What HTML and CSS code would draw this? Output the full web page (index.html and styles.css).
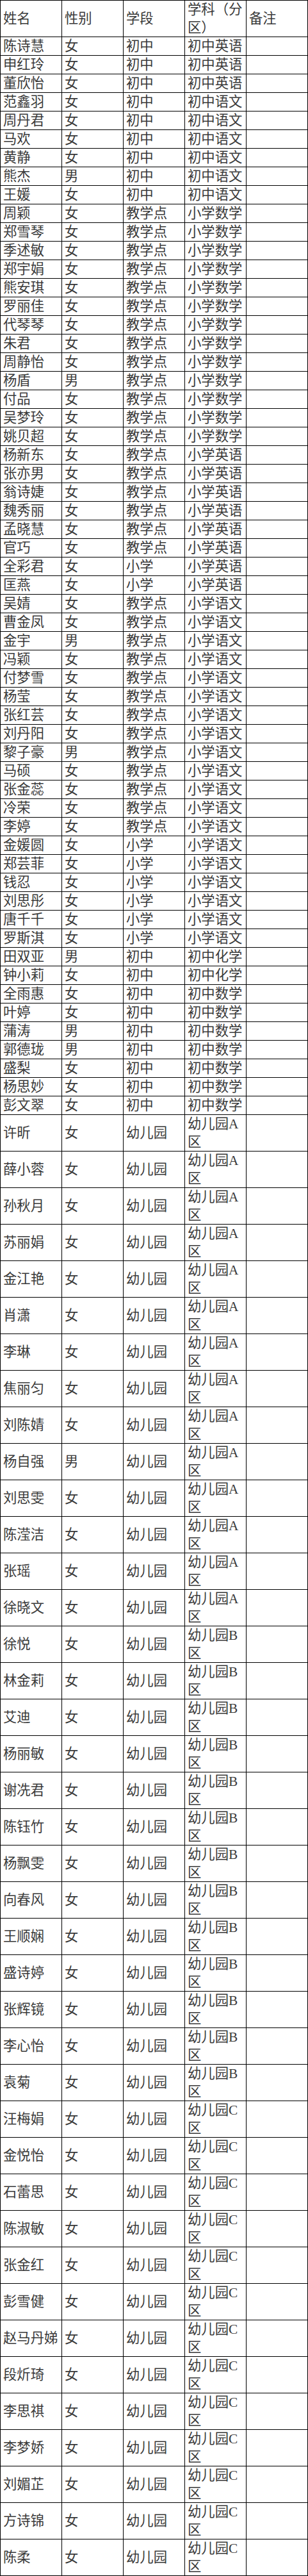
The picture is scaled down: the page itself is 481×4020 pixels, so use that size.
FILE: index.html
```html
<!DOCTYPE html>
<html lang="zh-CN">
<head>
<meta charset="utf-8">
<title>名单</title>
<link rel="stylesheet" href="styles.css">
</head>
<body>
<table class="roster">
<colgroup><col class="c"><col class="c"><col class="c"><col class="c"><col class="c"></colgroup>
<tbody>
<tr><td>姓名</td><td>性别</td><td>学段</td><td>学科（分区）</td><td>备注</td></tr>
<tr><td>陈诗慧</td><td>女</td><td>初中</td><td>初中英语</td><td></td></tr>
<tr><td>申红玲</td><td>女</td><td>初中</td><td>初中英语</td><td></td></tr>
<tr><td>董欣怡</td><td>女</td><td>初中</td><td>初中英语</td><td></td></tr>
<tr><td>范鑫羽</td><td>女</td><td>初中</td><td>初中语文</td><td></td></tr>
<tr><td>周丹君</td><td>女</td><td>初中</td><td>初中语文</td><td></td></tr>
<tr><td>马欢</td><td>女</td><td>初中</td><td>初中语文</td><td></td></tr>
<tr><td>黄静</td><td>女</td><td>初中</td><td>初中语文</td><td></td></tr>
<tr><td>熊杰</td><td>男</td><td>初中</td><td>初中语文</td><td></td></tr>
<tr><td>王媛</td><td>女</td><td>初中</td><td>初中语文</td><td></td></tr>
<tr><td>周颖</td><td>女</td><td>教学点</td><td>小学数学</td><td></td></tr>
<tr><td>郑雪琴</td><td>女</td><td>教学点</td><td>小学数学</td><td></td></tr>
<tr><td>季述敏</td><td>女</td><td>教学点</td><td>小学数学</td><td></td></tr>
<tr><td>郑宇娟</td><td>女</td><td>教学点</td><td>小学数学</td><td></td></tr>
<tr><td>熊安琪</td><td>女</td><td>教学点</td><td>小学数学</td><td></td></tr>
<tr><td>罗丽佳</td><td>女</td><td>教学点</td><td>小学数学</td><td></td></tr>
<tr><td>代琴琴</td><td>女</td><td>教学点</td><td>小学数学</td><td></td></tr>
<tr><td>朱君</td><td>女</td><td>教学点</td><td>小学数学</td><td></td></tr>
<tr><td>周静怡</td><td>女</td><td>教学点</td><td>小学数学</td><td></td></tr>
<tr><td>杨盾</td><td>男</td><td>教学点</td><td>小学数学</td><td></td></tr>
<tr><td>付品</td><td>女</td><td>教学点</td><td>小学数学</td><td></td></tr>
<tr><td>吴梦玲</td><td>女</td><td>教学点</td><td>小学数学</td><td></td></tr>
<tr><td>姚贝超</td><td>女</td><td>教学点</td><td>小学数学</td><td></td></tr>
<tr><td>杨新东</td><td>女</td><td>教学点</td><td>小学英语</td><td></td></tr>
<tr><td>张亦男</td><td>女</td><td>教学点</td><td>小学英语</td><td></td></tr>
<tr><td>翁诗婕</td><td>女</td><td>教学点</td><td>小学英语</td><td></td></tr>
<tr><td>魏秀丽</td><td>女</td><td>教学点</td><td>小学英语</td><td></td></tr>
<tr><td>孟晓慧</td><td>女</td><td>教学点</td><td>小学英语</td><td></td></tr>
<tr><td>官巧</td><td>女</td><td>教学点</td><td>小学英语</td><td></td></tr>
<tr><td>全彩君</td><td>女</td><td>小学</td><td>小学英语</td><td></td></tr>
<tr><td>匡燕</td><td>女</td><td>小学</td><td>小学英语</td><td></td></tr>
<tr><td>吴婧</td><td>女</td><td>教学点</td><td>小学语文</td><td></td></tr>
<tr><td>曹金凤</td><td>女</td><td>教学点</td><td>小学语文</td><td></td></tr>
<tr><td>金宇</td><td>男</td><td>教学点</td><td>小学语文</td><td></td></tr>
<tr><td>冯颖</td><td>女</td><td>教学点</td><td>小学语文</td><td></td></tr>
<tr><td>付梦雪</td><td>女</td><td>教学点</td><td>小学语文</td><td></td></tr>
<tr><td>杨莹</td><td>女</td><td>教学点</td><td>小学语文</td><td></td></tr>
<tr><td>张红芸</td><td>女</td><td>教学点</td><td>小学语文</td><td></td></tr>
<tr><td>刘丹阳</td><td>女</td><td>教学点</td><td>小学语文</td><td></td></tr>
<tr><td>黎子豪</td><td>男</td><td>教学点</td><td>小学语文</td><td></td></tr>
<tr><td>马硕</td><td>女</td><td>教学点</td><td>小学语文</td><td></td></tr>
<tr><td>张金蕊</td><td>女</td><td>教学点</td><td>小学语文</td><td></td></tr>
<tr><td>冷荣</td><td>女</td><td>教学点</td><td>小学语文</td><td></td></tr>
<tr><td>李婷</td><td>女</td><td>教学点</td><td>小学语文</td><td></td></tr>
<tr><td>金媛圆</td><td>女</td><td>小学</td><td>小学语文</td><td></td></tr>
<tr><td>郑芸菲</td><td>女</td><td>小学</td><td>小学语文</td><td></td></tr>
<tr><td>钱忍</td><td>女</td><td>小学</td><td>小学语文</td><td></td></tr>
<tr><td>刘思彤</td><td>女</td><td>小学</td><td>小学语文</td><td></td></tr>
<tr><td>唐千千</td><td>女</td><td>小学</td><td>小学语文</td><td></td></tr>
<tr><td>罗斯淇</td><td>女</td><td>小学</td><td>小学语文</td><td></td></tr>
<tr><td>田双亚</td><td>男</td><td>初中</td><td>初中化学</td><td></td></tr>
<tr><td>钟小莉</td><td>女</td><td>初中</td><td>初中化学</td><td></td></tr>
<tr><td>全雨惠</td><td>女</td><td>初中</td><td>初中数学</td><td></td></tr>
<tr><td>叶婷</td><td>女</td><td>初中</td><td>初中数学</td><td></td></tr>
<tr><td>蒲涛</td><td>男</td><td>初中</td><td>初中数学</td><td></td></tr>
<tr><td>郭德珑</td><td>男</td><td>初中</td><td>初中数学</td><td></td></tr>
<tr><td>盛梨</td><td>女</td><td>初中</td><td>初中数学</td><td></td></tr>
<tr><td>杨思妙</td><td>女</td><td>初中</td><td>初中数学</td><td></td></tr>
<tr><td>彭文翠</td><td>女</td><td>初中</td><td>初中数学</td><td></td></tr>
<tr><td>许昕</td><td>女</td><td>幼儿园</td><td>幼儿园A区</td><td></td></tr>
<tr><td>薛小蓉</td><td>女</td><td>幼儿园</td><td>幼儿园A区</td><td></td></tr>
<tr><td>孙秋月</td><td>女</td><td>幼儿园</td><td>幼儿园A区</td><td></td></tr>
<tr><td>苏丽娟</td><td>女</td><td>幼儿园</td><td>幼儿园A区</td><td></td></tr>
<tr><td>金江艳</td><td>女</td><td>幼儿园</td><td>幼儿园A区</td><td></td></tr>
<tr><td>肖潇</td><td>女</td><td>幼儿园</td><td>幼儿园A区</td><td></td></tr>
<tr><td>李琳</td><td>女</td><td>幼儿园</td><td>幼儿园A区</td><td></td></tr>
<tr><td>焦丽匀</td><td>女</td><td>幼儿园</td><td>幼儿园A区</td><td></td></tr>
<tr><td>刘陈婧</td><td>女</td><td>幼儿园</td><td>幼儿园A区</td><td></td></tr>
<tr><td>杨自强</td><td>男</td><td>幼儿园</td><td>幼儿园A区</td><td></td></tr>
<tr><td>刘思雯</td><td>女</td><td>幼儿园</td><td>幼儿园A区</td><td></td></tr>
<tr><td>陈滢洁</td><td>女</td><td>幼儿园</td><td>幼儿园A区</td><td></td></tr>
<tr><td>张瑶</td><td>女</td><td>幼儿园</td><td>幼儿园A区</td><td></td></tr>
<tr><td>徐晓文</td><td>女</td><td>幼儿园</td><td>幼儿园A区</td><td></td></tr>
<tr><td>徐悦</td><td>女</td><td>幼儿园</td><td>幼儿园B区</td><td></td></tr>
<tr><td>林金莉</td><td>女</td><td>幼儿园</td><td>幼儿园B区</td><td></td></tr>
<tr><td>艾迪</td><td>女</td><td>幼儿园</td><td>幼儿园B区</td><td></td></tr>
<tr><td>杨丽敏</td><td>女</td><td>幼儿园</td><td>幼儿园B区</td><td></td></tr>
<tr><td>谢冼君</td><td>女</td><td>幼儿园</td><td>幼儿园B区</td><td></td></tr>
<tr><td>陈钰竹</td><td>女</td><td>幼儿园</td><td>幼儿园B区</td><td></td></tr>
<tr><td>杨飘雯</td><td>女</td><td>幼儿园</td><td>幼儿园B区</td><td></td></tr>
<tr><td>向春风</td><td>女</td><td>幼儿园</td><td>幼儿园B区</td><td></td></tr>
<tr><td>王顺娴</td><td>女</td><td>幼儿园</td><td>幼儿园B区</td><td></td></tr>
<tr><td>盛诗婷</td><td>女</td><td>幼儿园</td><td>幼儿园B区</td><td></td></tr>
<tr><td>张辉镜</td><td>女</td><td>幼儿园</td><td>幼儿园B区</td><td></td></tr>
<tr><td>李心怡</td><td>女</td><td>幼儿园</td><td>幼儿园B区</td><td></td></tr>
<tr><td>袁菊</td><td>女</td><td>幼儿园</td><td>幼儿园B区</td><td></td></tr>
<tr><td>汪梅娟</td><td>女</td><td>幼儿园</td><td>幼儿园C区</td><td></td></tr>
<tr><td>金悦怡</td><td>女</td><td>幼儿园</td><td>幼儿园C区</td><td></td></tr>
<tr><td>石蕾思</td><td>女</td><td>幼儿园</td><td>幼儿园C区</td><td></td></tr>
<tr><td>陈淑敏</td><td>女</td><td>幼儿园</td><td>幼儿园C区</td><td></td></tr>
<tr><td>张金红</td><td>女</td><td>幼儿园</td><td>幼儿园C区</td><td></td></tr>
<tr><td>彭雪健</td><td>女</td><td>幼儿园</td><td>幼儿园C区</td><td></td></tr>
<tr><td>赵马丹娣</td><td>女</td><td>幼儿园</td><td>幼儿园C区</td><td></td></tr>
<tr><td>段炘琦</td><td>女</td><td>幼儿园</td><td>幼儿园C区</td><td></td></tr>
<tr><td>李思祺</td><td>女</td><td>幼儿园</td><td>幼儿园C区</td><td></td></tr>
<tr><td>李梦娇</td><td>女</td><td>幼儿园</td><td>幼儿园C区</td><td></td></tr>
<tr><td>刘媚芷</td><td>女</td><td>幼儿园</td><td>幼儿园C区</td><td></td></tr>
<tr><td>方诗锦</td><td>女</td><td>幼儿园</td><td>幼儿园C区</td><td></td></tr>
<tr><td>陈柔</td><td>女</td><td>幼儿园</td><td>幼儿园C区</td><td></td></tr>
</tbody>
</table>
</body>
</html>
```

FILE: styles.css
```css
html, body {
  margin: 0;
  padding: 0;
  background: #fff;
}

.roster {
  border-collapse: collapse;
  table-layout: fixed;
  width: 481px;
  font-family: "Liberation Serif", "Noto Sans CJK SC", serif;
  font-size: 21.33px;
  line-height: 28px;
  color: #3a3a3a;
}

.roster .c {
  width: 96px;
}

.roster td {
  border: 1px solid #000;
  padding: 0 3px 0 4px;
  vertical-align: middle;
  text-align: left;
  word-break: break-all;
}
```
